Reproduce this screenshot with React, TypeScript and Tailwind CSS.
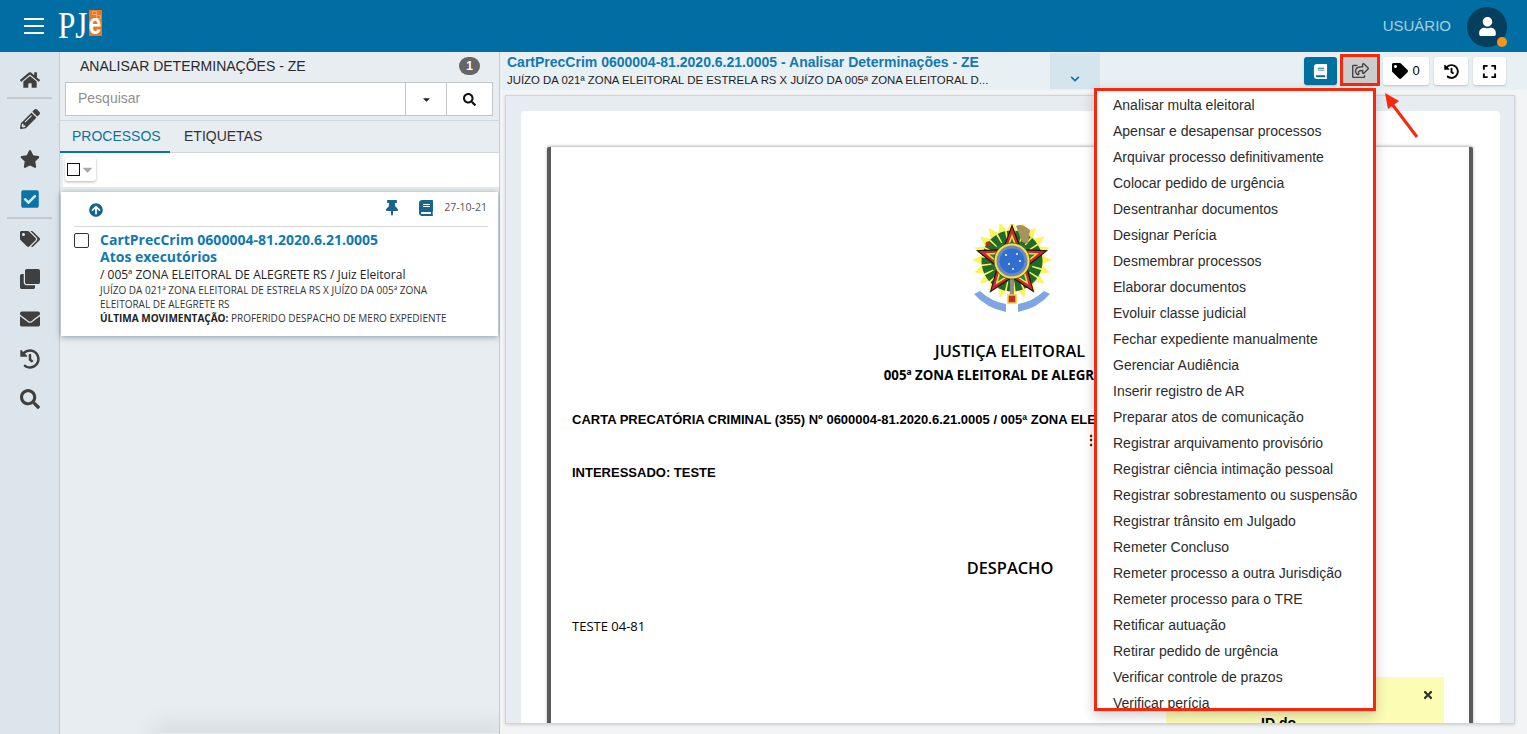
import React from 'react';
import {
  FaHome,
  FaPencilAlt,
  FaStar,
  FaCheckSquare,
  FaTags,
  FaClone,
  FaEnvelope,
  FaHistory,
  FaSearch,
  FaThumbtack,
  FaBook,
  FaArrowCircleUp,
  FaTag,
  FaExpand,
  FaUser,
  FaChevronDown,
  FaTimes,
  FaCaretDown,
  FaRegShareSquare,
} from 'react-icons/fa';

const menuItems = [
  'Analisar multa eleitoral',
  'Apensar e desapensar processos',
  'Arquivar processo definitivamente',
  'Colocar pedido de urgência',
  'Desentranhar documentos',
  'Designar Perícia',
  'Desmembrar processos',
  'Elaborar documentos',
  'Evoluir classe judicial',
  'Fechar expediente manualmente',
  'Gerenciar Audiência',
  'Inserir registro de AR',
  'Preparar atos de comunicação',
  'Registrar arquivamento provisório',
  'Registrar ciência intimação pessoal',
  'Registrar sobrestamento ou suspensão',
  'Registrar trânsito em Julgado',
  'Remeter Concluso',
  'Remeter processo a outra Jurisdição',
  'Remeter processo para o TRE',
  'Retificar autuação',
  'Retirar pedido de urgência',
  'Verificar controle de prazos',
  'Verificar perícia',
];

// points of a star polygon around (cx, cy), first tip straight up
const star = (cx: number, cy: number, outer: number, inner: number, tips: number) =>
  Array.from({ length: tips * 2 }, (_, i) => {
    const r = i % 2 === 0 ? outer : inner;
    const a = (Math.PI * i) / tips - Math.PI / 2;
    return `${(cx + r * Math.cos(a)).toFixed(1)},${(cy + r * Math.sin(a)).toFixed(1)}`;
  }).join(' ');

// Brazilian coat of arms, simplified
const Emblem = () => (
  <svg width="80" height="92" viewBox="0 0 80 92">
    <polygon points={star(40, 36, 40, 30, 20)} fill="#fdf45c" />
    <circle cx="40" cy="37" r="21" fill="#2c7a36" />
    <circle cx="40" cy="37" r="25" fill="none" stroke="#1f6b2c" strokeWidth="11" strokeDasharray="6 1.5" />
    <polygon points={star(40, 38, 38, 16, 5)} fill="#161616" />
    <polygon points={star(40, 38, 35, 14.5, 5)} fill="#d1262b" />
    <polygon points={star(40, 38, 28, 12, 5)} fill="#f2e33a" />
    <polygon points={star(40, 38, 24, 10, 5)} fill="#1f8a3a" />
    <rect x="38" y="52" width="4" height="24" fill="#8d8d8d" />
    <circle cx="40" cy="37" r="18" fill="#f2e33a" stroke="#222" strokeWidth="0.6" />
    <circle cx="40" cy="37" r="15.5" fill="#6d86c4" />
    <circle cx="40" cy="37" r="12.5" fill="#2f6fd0" />
    <circle cx="34" cy="31" r="1" fill="#fff" />
    <circle cx="45" cy="30" r="1" fill="#fff" />
    <circle cx="48" cy="37" r="1" fill="#fff" />
    <circle cx="37" cy="40" r="1" fill="#fff" />
    <circle cx="41" cy="45" r="1" fill="#fff" />
    <path d="M2 70 Q14 84 34 88 L34 80 Q20 78 8 67 Z" fill="#7ea6e2" />
    <path d="M78 70 Q66 84 46 88 L46 80 Q60 78 72 67 Z" fill="#7ea6e2" />
    <rect x="36" y="71" width="8" height="8" fill="#c92a2a" stroke="#e9d530" strokeWidth="1.5" />
    <path d="M44 2 Q50 -1 58 6 L56 20 L50 18 Z" fill="#a89260" />
    <circle cx="16" cy="20" r="2.5" fill="#a8322d" />
  </svg>
);

const Logo = () => (
  <div className="flex items-start ml-[14px] mt-[10px]">
    <span className="font-['Liberation_Serif',serif] text-white text-[38px] leading-[30px] scale-x-[0.82] origin-left w-[31px] whitespace-nowrap">
      PJ
    </span>
    <div className="relative w-[13px] h-[26px] bg-[#ee7623] flex justify-center items-end">
      <div className="absolute left-[3px] top-[1px] w-[5px] h-[4px] border border-[#f7a468]" />
      <div className="absolute left-[7px] top-[5px] w-[5px] h-[4px] border border-[#f7a468]" />
      <span className="relative font-['Liberation_Sans',sans-serif] font-bold text-white text-[29px] leading-[24px] scale-x-[0.78]">e</span>
    </div>
  </div>
);

const ToolButton = ({ children, className }: { children: React.ReactNode; className?: string }) => (
  <div className={`h-7 rounded-[3px] flex items-center justify-center shadow-[0_1px_2px_rgba(0,0,0,0.2)] ${className ?? ''}`}>
    {children}
  </div>
);

export default function App() {
  return (
    <div className="w-full h-[734px] overflow-hidden flex flex-col bg-[#f2f4f5] font-['Liberation_Sans',sans-serif] text-[#222]">
      <header className="h-[52px] shrink-0 bg-[#006ea3] flex items-start">
        <div className="w-5 mt-[18px] ml-6 flex flex-col gap-[5px]">
          <div className="h-[2px] bg-white" />
          <div className="h-[2px] bg-white" />
          <div className="h-[2px] bg-white" />
        </div>
        <Logo />
        <div className="ml-auto flex items-center h-full mr-[20px] pt-[1px]">
          <span className="text-[15px] text-[#a9cde0] mr-[16px]">USUÁRIO</span>
          <div className="relative w-10 h-10 rounded-full bg-[#063f5e] flex items-center justify-center text-white text-[19px]">
            <FaUser />
            <div className="absolute right-0 bottom-0 w-[10px] h-[10px] rounded-full bg-[#f7941d]" />
          </div>
        </div>
      </header>

      <div className="flex-1 flex min-h-0">
        <nav className="w-[60px] shrink-0 bg-[#dde5ec] border-r border-[#c5cbd0] pt-[9px] text-[20px] text-[#3f3f3f]">
          <div className="h-[38px] pt-[2px] mx-[7px] border-b-2 border-[#c6c9cc] flex items-center justify-center"><FaHome /></div>
          <div className="h-10 flex items-center justify-center"><FaPencilAlt /></div>
          <div className="h-10 flex items-center justify-center"><FaStar /></div>
          <div className="h-10 pt-[2px] mx-[7px] border-b-2 border-[#c6c9cc] flex items-center justify-center"><FaCheckSquare className="text-[#0a74a8]" /></div>
          <div className="h-10 flex items-center justify-center"><FaTags /></div>
          <div className="h-10 flex items-center justify-center"><FaClone /></div>
          <div className="h-10 flex items-center justify-center"><FaEnvelope /></div>
          <div className="h-10 flex items-center justify-center"><FaHistory /></div>
          <div className="h-10 flex items-center justify-center"><FaSearch /></div>
        </nav>

        <aside className="w-[440px] shrink-0 bg-[#e7edf1] border-r border-[#c5cbd0] flex flex-col">
          <div className="h-[30px] flex items-center pl-[20px] pr-[19px] pb-[2px] shrink-0">
            <span className="text-[14px] text-[#2a2a2a]">ANALISAR DETERMINAÇÕES - ZE</span>
            <span className="ml-auto w-[21px] h-[18px] rounded-full bg-[#666] text-white text-[12px] font-bold flex items-center justify-center">1</span>
          </div>
          <div className="ml-[5px] mr-[6px] h-[34px] flex bg-white border border-[#c4c4c4] shrink-0">
            <div className="flex-1 pl-[12px] pb-[2px] flex items-center text-[14px] text-[#8f8f8f]">Pesquisar</div>
            <div className="w-[41px] border-l border-[#c4c4c4] flex items-center justify-center text-[11px] text-[#222]"><FaCaretDown /></div>
            <div className="w-[46px] border-l border-[#c4c4c4] flex items-center justify-center text-[13px] text-[#111]"><FaSearch /></div>
          </div>
          <div className="mt-[4px] h-[33px] border-t border-b border-[#d1d6da] flex shrink-0 text-[14px]">
            <div className="w-[110px] pl-[12px] flex items-center text-[#10719f] border-b-2 border-[#0a74a8] -mb-px">PROCESSOS</div>
            <div className="pl-[14px] flex items-center text-[#333]">ETIQUETAS</div>
          </div>
          <div className="h-[34px] bg-white ml-[3px] shrink-0 flex items-center pl-[2px]">
            <div className="w-[31px] h-[24px] bg-white rounded-[3px] shadow-[0_1px_3px_rgba(0,0,0,0.3)] flex items-center pl-[2px] mt-[-2px]">
              <div className="w-[13px] h-[13px] border-[1.5px] border-[#111]" />
              <FaCaretDown className="text-[#aaa] text-[15px]" />
            </div>
          </div>
          <div className="mt-[5px] h-[144px] bg-white shrink-0 shadow-[0_1px_6px_rgba(40,70,90,0.5)] ml-[1px] mr-[1px] pl-[13px] pr-[10px] font-['Open_Sans',sans-serif]">
            <div className="h-[35px] flex items-center border-b border-[#d8d8d8] relative">
              <FaArrowCircleUp className="text-[#17648f] text-[14px] ml-[15px] mt-[2px]" />
              <FaThumbtack className="text-[#17648f] text-[16px] ml-auto mr-[18px] mt-[-3px]" />
              <FaBook className="text-[#17648f] text-[16px] mr-[10px] mt-[-2px]" />
              <span className="text-[10.5px] text-[#555] mt-[-3px] mr-px">27-10-21</span>
            </div>
            <div className="flex pt-[4px]">
              <div className="w-[15px] h-[15px] mt-[2px] rounded-[2px] border-[1.5px] border-[#333] shrink-0" />
              <div className="ml-[11px]">
                <div className="text-[#1079b0] text-[14px] font-bold leading-[17px]">CartPrecCrim 0600004-81.2020.6.21.0005</div>
                <div className="text-[#1079b0] text-[14px] font-bold leading-[17px]">Atos executórios</div>
                <div className="text-[12px] leading-[18px] mt-px -mb-px text-[#222]">/ 005ª ZONA ELEITORAL DE ALEGRETE RS / Juiz Eleitoral</div>
                <div className="text-[10px] leading-[14px] text-[#333] w-[345px]">JUÍZO DA 021ª ZONA ELEITORAL DE ESTRELA RS X JUÍZO DA 005ª ZONA ELEITORAL DE ALEGRETE RS</div>
                <div className="text-[10px] leading-[14px] text-[#333]"><b className="text-[#222]">ÚLTIMA MOVIMENTAÇÃO:</b> PROFERIDO DESPACHO DE MERO EXPEDIENTE</div>
              </div>
            </div>
          </div>
          {/* soft shadow rising from the page bottom */}
          <div className="mt-auto h-px ml-[100px] shadow-[0_0_22px_8px_rgba(0,0,0,0.09)]" />
        </aside>

        <main className="flex-1 min-w-0 flex flex-col relative">
          <div className="h-[38px] shrink-0 bg-[#e9f0f4] flex pl-[7px]">
            <div className="w-[543px] shrink-0 pt-[2px]">
              <div className="text-[14px] leading-[17px] font-bold text-[#1079b0]">CartPrecCrim 0600004-81.2020.6.21.0005 - Analisar Determinações - ZE</div>
              <div className="text-[11.4px] leading-[17px] mt-[1px] text-[#222]">JUÍZO DA 021ª ZONA ELEITORAL DE ESTRELA RS X JUÍZO DA 005ª ZONA ELEITORAL D...</div>
            </div>
            <div className="w-[50px] h-[36px] mt-[1px] bg-[#d5e5ee] flex items-end justify-center pb-[5px] text-[#0a74a8] text-[10px]">
              <FaChevronDown />
            </div>
            <div className="ml-auto mr-[21px] flex items-start pt-[5px] gap-[4px]">
              <ToolButton className="w-[33px] bg-[#00719f] text-white text-[15px]"><FaBook /></ToolButton>
              <div className="w-[40px] h-[32px] -mt-[3px] -ml-px border-[3px] border-[#f7290d] bg-[#cccccc] flex items-center justify-center text-[#444] text-[17px]">
                <FaRegShareSquare />
              </div>
              <ToolButton className="w-[46px] bg-white text-black text-[16px] gap-[4px] ml-[-1px]">
                <FaTag />
                <span className="text-[13px]">0</span>
              </ToolButton>
              <ToolButton className="w-[34px] bg-white text-black text-[15px] ml-px"><FaHistory /></ToolButton>
              <ToolButton className="w-[33px] bg-white text-black text-[15px] ml-px"><FaExpand /></ToolButton>
            </div>
          </div>

          <div className="flex-1 min-h-0 pt-[5px] pl-[5px] pr-[12px] pb-[10px] bg-[#f2f4f5]">
            <div className="h-full border border-[#cfd4d8] bg-[#e6ecf1] pl-[15px] pr-[14px] pt-[15px] shadow-[0_1px_3px_rgba(0,0,0,0.15)] overflow-hidden relative">
              <div className="h-full bg-white rounded-t-[4px] pl-[26px] pr-[27px] pt-[36px]">
                <div className="h-[580px] bg-white border-l-[4px] border-r-[4px] border-[#5a5a5a] shadow-[0_-1px_3px_rgba(0,0,0,0.3)] rounded-t-[2px] pl-[21px] text-black overflow-hidden">
                  <div className="flex justify-center pt-[77px] h-[190px] pl-[4px] pr-[21px]">
                    <Emblem />
                  </div>
                  <div className="text-center pr-[21px] font-['Open_Sans',sans-serif] font-semibold text-[16.4px] leading-[24px] mt-[2px]">JUSTIÇA ELEITORAL</div>
                  <div className="text-center pr-[21px] font-['Open_Sans',sans-serif] font-bold text-[13.3px] leading-[20px] mt-[2px] whitespace-nowrap">005ª ZONA ELEITORAL DE ALEGRETE RS</div>
                  <div className="mt-[26px] text-[13px] font-bold leading-[18px] whitespace-nowrap">CARTA PRECATÓRIA CRIMINAL (355) Nº 0600004-81.2020.6.21.0005 / 005ª ZONA ELEITORAL DE ALEGRETE RS</div>
                  <div className="mt-[35px] text-[13px] font-bold leading-[18px]">INTERESSADO: TESTE</div>
                  <div className="mt-[74px] text-center pr-[21px] font-['Open_Sans',sans-serif] font-semibold text-[16.4px] leading-[24px]">DESPACHO</div>
                  <div className="mt-[37px] text-[13px] font-['Open_Sans',sans-serif] leading-[18px]">TESTE 04-81</div>
                </div>
              </div>
              {/* sticky note */}
              <div className="absolute left-[660px] top-[581px] w-[278px] h-[60px] bg-[#fdfcb5] text-black">
                <FaTimes className="absolute right-[10px] top-[12px] text-[12px] text-[#333]" />
                <div className="absolute left-[95px] top-[36px] text-[14px] leading-[20px] font-bold">ID do</div>
              </div>
              <div className="absolute left-[579px] top-[336px] w-[11px] h-[20px] bg-white text-[12px] font-bold leading-[16px] text-right text-black">⋮</div>
            </div>
          </div>

          {/* action menu */}
          <div className="absolute left-[594px] top-[36px] w-[282px] h-[623px] bg-white border-[3px] border-[#f7290d] overflow-hidden shadow-[0_4px_12px_rgba(0,0,0,0.2)] pl-[16px] pt-[1px]">
            {menuItems.map((item) => (
              <div key={item} className="h-[26px] leading-[26px] text-[14px] text-[#2b2b2b] whitespace-nowrap">
                {item}
              </div>
            ))}
          </div>

          {/* red arrow */}
          <svg className="absolute left-[879px] top-[36px]" width="50" height="54" viewBox="0 0 50 54">
            <line x1="38" y1="49" x2="10" y2="12" stroke="#f7290d" strokeWidth="3" />
            <polygon points="6,5 20,13 9,21" fill="#f7290d" />
          </svg>
        </main>
      </div>
    </div>
  );
}
